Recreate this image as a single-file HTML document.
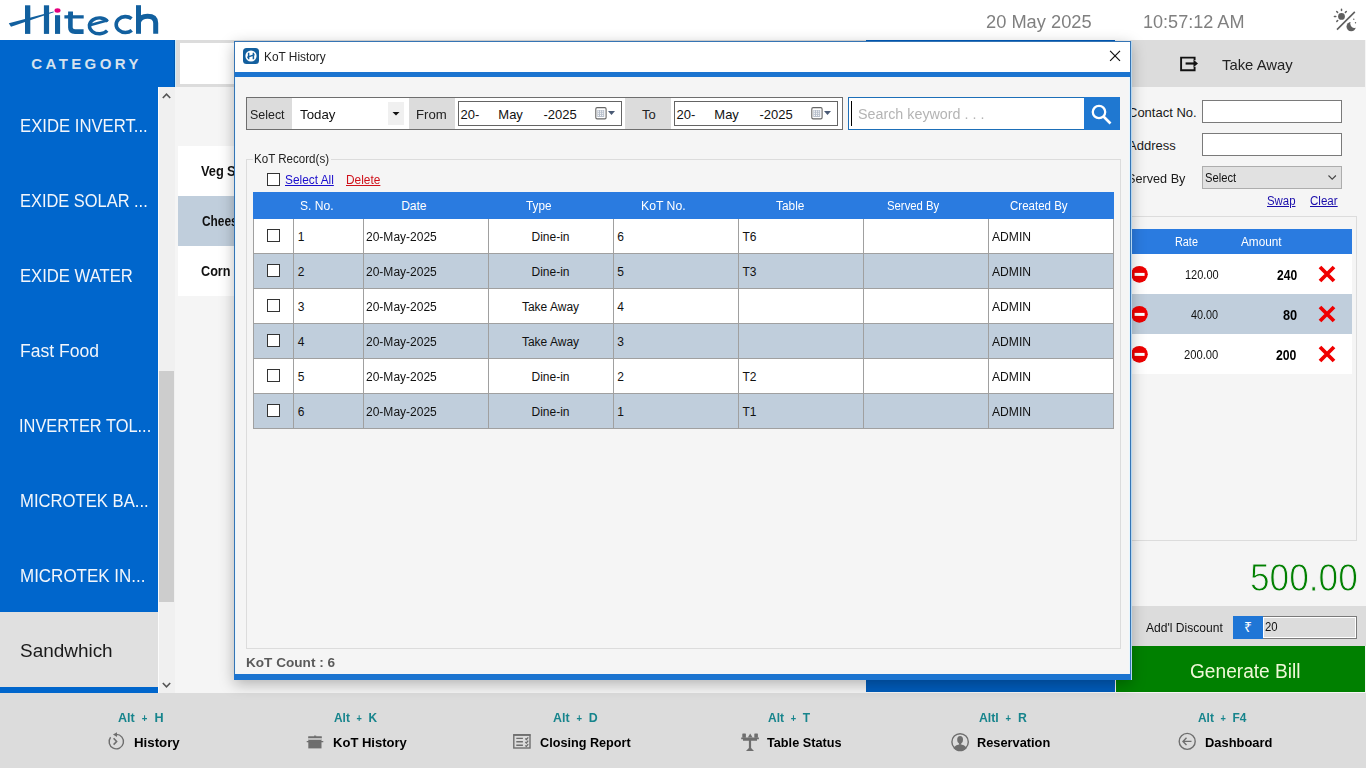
<!DOCTYPE html>
<html><head><meta charset="utf-8"><title>KoT History</title>
<style>
html,body{margin:0;padding:0;width:1366px;height:768px;overflow:hidden;font-family:"Liberation Sans", sans-serif;}
div{font-family:"Liberation Sans", sans-serif;}
</style></head><body>
<div style="position:absolute;left:0px;top:0px;width:1366px;height:40px;background:#fff"></div>
<div style="position:absolute;left:0px;top:40px;width:1366px;height:653px;background:#f5f5f5"></div>
<div style="position:absolute;left:0px;top:693px;width:1366px;height:75px;background:#dcdcdc"></div>
<svg style="position:absolute;left:0;top:0" width="170" height="40" viewBox="0 0 170 40">
<rect x="25" y="5.3" width="5.3" height="28.6" fill="#12609f"/>
<rect x="43.9" y="5.3" width="5.2" height="28.6" fill="#12609f"/>
<rect x="55" y="15.2" width="5.1" height="18.7" fill="#12609f"/>
<ellipse cx="57.5" cy="10.5" rx="3" ry="2.2" fill="#e5007e"/>
<path d="M8.8 23.2 L53.5 11.5 L53.8 12.3 L11 26.8 Z" fill="#12609f"/>
<g fill="none" stroke="#12609f">
<path d="M70.4 11.5 V27.5 Q70.4 31.6 75 31.6 H83.6" stroke-width="4.6"/>
<path d="M88 25.8 L107.8 20.2" stroke-width="2.6"/>
<path d="M107.6 21.5 A9.9 7.9 0 1 0 107.2 30.6" stroke-width="3.4"/>
<path d="M131.6 18.6 A9.3 7.95 0 1 0 131.8 30.4" stroke-width="3.6"/>
<path d="M138.5 22 Q140.5 16.2 147.5 16.2 Q155.7 16.2 155.7 23 V33.8" stroke-width="5"/>
</g>
<path d="M64.4 15.3 H83.7 V18.5 H64.4 Z M67.6 15.3 L73 11.5 V15.3 Z" fill="#12609f"/>
<rect x="136" y="5.2" width="5" height="28.6" fill="#12609f"/>
</svg>
<div style="position:absolute;left:985.56px;top:14px;font-size:17.5px;line-height:17.5px;color:#808080;font-weight:normal;white-space:nowrap;transform:scaleX(1.0440);transform-origin:0 0;">20 May 2025</div>
<div style="position:absolute;left:1142.67px;top:14px;font-size:17.5px;line-height:17.5px;color:#808080;font-weight:normal;white-space:nowrap;transform:scaleX(1.0323);transform-origin:0 0;">10:57:12 AM</div>
<svg style="position:absolute;left:1330px;top:5px" width="30" height="30" viewBox="1330 5 30 30">
<defs><mask id="mm"><rect x="1330" y="5" width="30" height="30" fill="#fff"/><circle cx="1354.6" cy="23.6" r="4.3" fill="#000"/></mask></defs>
<g fill="#5f5f5f" stroke="none">
<circle cx="1341.5" cy="16.4" r="3.4"/>
<circle cx="1351.2" cy="26.6" r="4.7" mask="url(#mm)"/>
<circle cx="1353.8" cy="19.3" r="0.7"/><circle cx="1355.5" cy="22.7" r="0.7"/>
</g>
<g stroke="#5f5f5f" stroke-width="1.5" stroke-linecap="round">
<path d="M1341.5 9.2 V10.6 M1336.7 11.5 L1337.6 12.4 M1346.3 11.5 L1345.4 12.4 M1334.4 16.6 H1335.8 M1336.8 21.4 L1337.7 20.5"/>
</g>
<line x1="1337" y1="29.6" x2="1354.8" y2="11.9" stroke="#5f5f5f" stroke-width="1.6"/>
</svg>
<div style="position:absolute;left:0px;top:40px;width:175px;height:47px;background:#0066cc"></div>
<div style="position:absolute;left:31.30px;top:56px;font-size:15px;line-height:15px;color:#d6e2ee;font-weight:bold;white-space:nowrap;transform:scaleX(1.0000);transform-origin:0 0;letter-spacing:3.4px;">CATEGORY</div>
<div style="position:absolute;left:0px;top:87px;width:158px;height:606px;background:#0066cc"></div>
<div style="position:absolute;left:20.25px;top:118px;font-size:17.5px;line-height:17.5px;color:#f2f6fb;font-weight:normal;white-space:nowrap;transform:scaleX(0.9542);transform-origin:0 0;">EXIDE INVERT...</div>
<div style="position:absolute;left:20.26px;top:193px;font-size:17.5px;line-height:17.5px;color:#f2f6fb;font-weight:normal;white-space:nowrap;transform:scaleX(0.9381);transform-origin:0 0;">EXIDE SOLAR ...</div>
<div style="position:absolute;left:20.25px;top:268px;font-size:17.5px;line-height:17.5px;color:#f2f6fb;font-weight:normal;white-space:nowrap;transform:scaleX(0.9513);transform-origin:0 0;">EXIDE WATER</div>
<div style="position:absolute;left:20.20px;top:343px;font-size:17.5px;line-height:17.5px;color:#f2f6fb;font-weight:normal;white-space:nowrap;transform:scaleX(1.0026);transform-origin:0 0;">Fast Food</div>
<div style="position:absolute;left:19.32px;top:418px;font-size:17.5px;line-height:17.5px;color:#f2f6fb;font-weight:normal;white-space:nowrap;transform:scaleX(0.9377);transform-origin:0 0;">INVERTER TOL...</div>
<div style="position:absolute;left:20.25px;top:493px;font-size:17.5px;line-height:17.5px;color:#f2f6fb;font-weight:normal;white-space:nowrap;transform:scaleX(0.9526);transform-origin:0 0;">MICROTEK BA...</div>
<div style="position:absolute;left:20.23px;top:568px;font-size:17.5px;line-height:17.5px;color:#f2f6fb;font-weight:normal;white-space:nowrap;transform:scaleX(0.9701);transform-origin:0 0;">MICROTEK IN...</div>
<div style="position:absolute;left:0px;top:612px;width:158px;height:75px;background:#e0e0e0"></div>
<div style="position:absolute;left:19.62px;top:643px;font-size:17.5px;line-height:17.5px;color:#1a1a1a;font-weight:normal;white-space:nowrap;transform:scaleX(1.0821);transform-origin:0 0;">Sandwhich</div>
<div style="position:absolute;left:0px;top:687px;width:158px;height:6px;background:#0066cc"></div>
<div style="position:absolute;left:158px;top:87px;width:17px;height:606px;background:#f0f0f0"></div>
<div style="position:absolute;left:158px;top:87px;width:1px;height:606px;background:#fbfbfb"></div>
<div style="position:absolute;left:159px;top:371px;width:15px;height:231px;background:#cdcdcd"></div>
<svg style="position:absolute;left:158px;top:87px" width="17" height="606"><path d="M4.8 11 L8.5 7.2 L12.2 11" fill="none" stroke="#555" stroke-width="1.6"/><path d="M4.8 596 L8.5 599.8 L12.2 596" fill="none" stroke="#555" stroke-width="1.6"/></svg>
<div style="position:absolute;left:175px;top:40px;width:700px;height:47px;background:#dcdcdc"></div>
<div style="position:absolute;left:180px;top:43px;width:690px;height:41px;background:#fff"></div>
<div style="position:absolute;left:866px;top:40px;width:249px;height:2px;background:#005cbb"></div>
<div style="position:absolute;left:174px;top:40px;width:1px;height:47px;background:#0058b0"></div>
<div style="position:absolute;left:175px;top:40px;width:1px;height:47px;background:#c8ecff"></div>
<div style="position:absolute;left:178px;top:146px;width:700px;height:50px;background:#fff"></div>
<div style="position:absolute;left:178px;top:196px;width:700px;height:50px;background:#c0cedc"></div>
<div style="position:absolute;left:178px;top:246px;width:700px;height:50px;background:#fff"></div>
<div style="position:absolute;left:201.00px;top:164px;font-size:14px;line-height:14px;color:#111;font-weight:bold;white-space:nowrap;transform:scaleX(0.9167);transform-origin:0 0;">Veg</div>
<div style="position:absolute;left:227.4px;top:164px;font-size:14px;line-height:14px;color:#111;font-weight:bold;white-space:nowrap;transform:scaleX(0.92);transform-origin:0 0;">Sandwich</div>
<div style="position:absolute;left:201.5px;top:214px;font-size:14px;line-height:14px;color:#111;font-weight:bold;white-space:nowrap;transform:scaleX(0.85);transform-origin:0 0;">Cheese Sandwich</div>
<div style="position:absolute;left:200.60px;top:264px;font-size:14px;line-height:14px;color:#111;font-weight:bold;white-space:nowrap;transform:scaleX(0.9032);transform-origin:0 0;">Corn</div>
<div style="position:absolute;left:1130px;top:40px;width:235px;height:47px;background:#dcdcdc"></div>
<svg style="position:absolute;left:1178px;top:54px" width="22" height="20" viewBox="1178 54 22 20"><path d="M1194.6 60.2 V57.6 H1181.1 V70.3 H1194.6 V66.8" fill="none" stroke="#111" stroke-width="1.9"/><path d="M1185.6 63.5 H1194" stroke="#111" stroke-width="2.2"/><path d="M1193.5 59.8 L1198 63.5 L1193.5 67.2 Z" fill="#111"/></svg>
<div style="position:absolute;left:1221.70px;top:57px;font-size:15px;line-height:15px;color:#222;font-weight:normal;white-space:nowrap;transform:scaleX(0.9889);transform-origin:0 0;">Take Away</div>
<div style="position:absolute;left:1128px;top:106px;font-size:13px;line-height:13px;color:#1a1a1a;font-weight:normal;white-space:nowrap;">Contact No.</div>
<div style="position:absolute;left:1128px;top:139px;font-size:13px;line-height:13px;color:#1a1a1a;font-weight:normal;white-space:nowrap;">Address</div>
<div style="position:absolute;left:1126.53px;top:172px;font-size:13px;line-height:13px;color:#1a1a1a;font-weight:normal;white-space:nowrap;transform:scaleX(0.9746);transform-origin:0 0;">Served By</div>
<div style="position:absolute;left:1202px;top:100px;width:140px;height:23px;background:#fff;box-sizing:border-box;border:1px solid #7a7a7a"></div>
<div style="position:absolute;left:1202px;top:133px;width:140px;height:23px;background:#fff;box-sizing:border-box;border:1px solid #7a7a7a"></div>
<div style="position:absolute;left:1202px;top:166px;width:140px;height:23px;background:#e1e1e1;box-sizing:border-box;border:1px solid #adadad"></div>
<div style="position:absolute;left:1205.30px;top:172px;font-size:12.5px;line-height:12.5px;color:#111;font-weight:normal;white-space:nowrap;transform:scaleX(0.8971);transform-origin:0 0;">Select</div>
<svg style="position:absolute;left:1326px;top:172px" width="12" height="10"><path d="M2.5 3.5 L6.2 7.2 L9.9 3.5" fill="none" stroke="#444" stroke-width="1.1"/></svg>
<div style="position:absolute;left:1267.35px;top:195px;font-size:12px;line-height:12px;color:#1a0dab;font-weight:normal;white-space:nowrap;transform:scaleX(0.9483);transform-origin:0 0;text-decoration:underline;">Swap</div>
<div style="position:absolute;left:1310.14px;top:195px;font-size:12px;line-height:12px;color:#1a0dab;font-weight:normal;white-space:nowrap;transform:scaleX(0.9643);transform-origin:0 0;text-decoration:underline;">Clear</div>
<div style="position:absolute;left:1120px;top:216px;width:237px;height:325px;box-sizing:border-box;border:1px solid #dcdcdc"></div>
<div style="position:absolute;left:1130px;top:229px;width:222px;height:25px;background:#2a7be0"></div>
<div style="position:absolute;left:1174.70px;top:236px;font-size:12px;line-height:12px;color:#fff;font-weight:normal;white-space:nowrap;transform:scaleX(0.9042);transform-origin:0 0;">Rate</div>
<div style="position:absolute;left:1241.40px;top:236px;font-size:12px;line-height:12px;color:#fff;font-weight:normal;white-space:nowrap;transform:scaleX(0.9829);transform-origin:0 0;">Amount</div>
<div style="position:absolute;left:1130px;top:254px;width:222px;height:40px;background:#fff"></div>
<div style="position:absolute;left:1184.98px;top:269px;font-size:12px;line-height:12px;color:#111;font-weight:normal;white-space:nowrap;transform:scaleX(0.9171);transform-origin:0 0;">120.00</div>
<div style="position:absolute;left:1276.70px;top:268px;font-size:14px;line-height:14px;color:#000;font-weight:bold;white-space:nowrap;transform:scaleX(0.8609);transform-origin:0 0;">240</div>
<svg style="position:absolute;left:1130px;top:265px" width="20" height="20" viewBox="0 0 20 20"><circle cx="9.4" cy="9.3" r="8.4" fill="#ee0000"/><rect x="4.6" y="7.9" width="10" height="3" fill="#fff"/></svg>
<svg style="position:absolute;left:1317px;top:264px" width="20" height="20" viewBox="0 0 20 20"><path d="M3 3 L17 17 M17 3 L3 17" stroke="#f00000" stroke-width="3.8"/></svg>
<div style="position:absolute;left:1130px;top:294px;width:222px;height:40px;background:#c0cedc"></div>
<div style="position:absolute;left:1190.90px;top:309px;font-size:12px;line-height:12px;color:#111;font-weight:normal;white-space:nowrap;transform:scaleX(0.9033);transform-origin:0 0;">40.00</div>
<div style="position:absolute;left:1282.80px;top:308px;font-size:14px;line-height:14px;color:#000;font-weight:bold;white-space:nowrap;transform:scaleX(0.9133);transform-origin:0 0;">80</div>
<svg style="position:absolute;left:1130px;top:305px" width="20" height="20" viewBox="0 0 20 20"><circle cx="9.4" cy="9.3" r="8.4" fill="#ee0000"/><rect x="4.6" y="7.9" width="10" height="3" fill="#fff"/></svg>
<svg style="position:absolute;left:1317px;top:304px" width="20" height="20" viewBox="0 0 20 20"><path d="M3 3 L17 17 M17 3 L3 17" stroke="#f00000" stroke-width="3.8"/></svg>
<div style="position:absolute;left:1130px;top:334px;width:222px;height:40px;background:#fff"></div>
<div style="position:absolute;left:1184.37px;top:349px;font-size:12px;line-height:12px;color:#111;font-weight:normal;white-space:nowrap;transform:scaleX(0.9343);transform-origin:0 0;">200.00</div>
<div style="position:absolute;left:1276.40px;top:348px;font-size:14px;line-height:14px;color:#000;font-weight:bold;white-space:nowrap;transform:scaleX(0.8739);transform-origin:0 0;">200</div>
<svg style="position:absolute;left:1130px;top:345px" width="20" height="20" viewBox="0 0 20 20"><circle cx="9.4" cy="9.3" r="8.4" fill="#ee0000"/><rect x="4.6" y="7.9" width="10" height="3" fill="#fff"/></svg>
<svg style="position:absolute;left:1317px;top:344px" width="20" height="20" viewBox="0 0 20 20"><path d="M3 3 L17 17 M17 3 L3 17" stroke="#f00000" stroke-width="3.8"/></svg>
<div style="position:absolute;left:1249.74px;top:559px;font-size:38px;line-height:38px;color:#008000;font-weight:normal;white-space:nowrap;transform:scaleX(0.9277);transform-origin:0 0;-webkit-text-stroke:0.9px #f5f5f5;">500.00</div>
<div style="position:absolute;left:1130px;top:606px;width:236px;height:40px;background:#dcdcdc"></div>
<div style="position:absolute;left:1145.50px;top:622px;font-size:12.5px;line-height:12.5px;color:#111;font-weight:normal;white-space:nowrap;transform:scaleX(0.9650);transform-origin:0 0;">Add'l Discount</div>
<div style="position:absolute;left:1233px;top:616px;width:30px;height:23px;background:#1f76d6"></div>
<div style="position:absolute;left:1232.5px;top:620px;font-size:14px;line-height:14px;color:#fff;font-weight:normal;white-space:nowrap;text-align:center;width:30px;">&#8377;</div>
<div style="position:absolute;left:1263px;top:616px;width:94px;height:23px;background:#dcdcdc;box-sizing:border-box;border:1px solid #7a7a7a;border-left:none;box-shadow:inset 1px 1px 0 #fff, inset -1px -1px 0 #fff"></div>
<div style="position:absolute;left:1265.29px;top:621px;font-size:12.5px;line-height:12.5px;color:#111;font-weight:normal;white-space:nowrap;transform:scaleX(0.9077);transform-origin:0 0;">20</div>
<div style="position:absolute;left:866px;top:680px;width:249px;height:12px;background:#005cbb"></div>
<div style="position:absolute;left:1116px;top:646px;width:249px;height:46px;background:#008000"></div>
<div style="position:absolute;left:1190.44px;top:661px;font-size:20px;line-height:20px;color:#f0f8d8;font-weight:normal;white-space:nowrap;transform:scaleX(0.9561);transform-origin:0 0;">Generate Bill</div>
<div style="position:absolute;left:118.20px;top:711px;font-size:13px;line-height:13px;color:#16848c;font-weight:bold;white-space:nowrap;transform:scaleX(0.9674);transform-origin:0 0;">Alt&nbsp;&nbsp;<span style="font-size:10px;position:relative;top:-0.5px">+</span>&nbsp;&nbsp;H</div>
<div style="position:absolute;left:133.58px;top:736px;font-size:13px;line-height:13px;color:#000;font-weight:bold;white-space:nowrap;transform:scaleX(1.0205);transform-origin:0 0;">History</div>
<div style="position:absolute;left:334.20px;top:711px;font-size:13px;line-height:13px;color:#16848c;font-weight:bold;white-space:nowrap;transform:scaleX(0.9149);transform-origin:0 0;">Alt&nbsp;&nbsp;<span style="font-size:10px;position:relative;top:-0.5px">+</span>&nbsp;&nbsp;K</div>
<div style="position:absolute;left:332.60px;top:736px;font-size:13px;line-height:13px;color:#000;font-weight:bold;white-space:nowrap;transform:scaleX(1.0027);transform-origin:0 0;">KoT History</div>
<div style="position:absolute;left:553.30px;top:711px;font-size:13px;line-height:13px;color:#16848c;font-weight:bold;white-space:nowrap;transform:scaleX(0.9532);transform-origin:0 0;">Alt&nbsp;&nbsp;<span style="font-size:10px;position:relative;top:-0.5px">+</span>&nbsp;&nbsp;D</div>
<div style="position:absolute;left:540.40px;top:736px;font-size:13px;line-height:13px;color:#000;font-weight:bold;white-space:nowrap;transform:scaleX(0.9731);transform-origin:0 0;">Closing Report</div>
<div style="position:absolute;left:768.40px;top:711px;font-size:13px;line-height:13px;color:#16848c;font-weight:bold;white-space:nowrap;transform:scaleX(0.9217);transform-origin:0 0;">Alt&nbsp;&nbsp;<span style="font-size:10px;position:relative;top:-0.5px">+</span>&nbsp;&nbsp;T</div>
<div style="position:absolute;left:766.50px;top:736px;font-size:13px;line-height:13px;color:#000;font-weight:bold;white-space:nowrap;transform:scaleX(0.9763);transform-origin:0 0;">Table Status</div>
<div style="position:absolute;left:979.20px;top:711px;font-size:13px;line-height:13px;color:#16848c;font-weight:bold;white-space:nowrap;transform:scaleX(0.9440);transform-origin:0 0;">Altl&nbsp;&nbsp;<span style="font-size:10px;position:relative;top:-0.5px">+</span>&nbsp;&nbsp;R</div>
<div style="position:absolute;left:976.72px;top:736px;font-size:13px;line-height:13px;color:#000;font-weight:bold;white-space:nowrap;transform:scaleX(0.9836);transform-origin:0 0;">Reservation</div>
<div style="position:absolute;left:1197.50px;top:711px;font-size:13px;line-height:13px;color:#16848c;font-weight:bold;white-space:nowrap;transform:scaleX(0.9170);transform-origin:0 0;">Alt&nbsp;&nbsp;<span style="font-size:10px;position:relative;top:-0.5px">+</span>&nbsp;&nbsp;F4</div>
<div style="position:absolute;left:1204.71px;top:736px;font-size:13px;line-height:13px;color:#000;font-weight:bold;white-space:nowrap;transform:scaleX(0.9924);transform-origin:0 0;">Dashboard</div>
<svg style="position:absolute;left:0;top:725px" width="1366" height="30" viewBox="0 725 1366 30">
<g fill="none" stroke="#6e6e6e" stroke-width="1.4">
<path d="M110.6 737.2 A7.2 7.2 0 1 0 116.3 734.4"/>
<path d="M113.6 738.2 L116.6 741.5 L113.6 744.6" stroke-width="1.6"/>
<circle cx="1187.2" cy="741.4" r="8"/>
<path d="M1191.5 741.4 H1183 M1186.5 737.8 L1183 741.4 L1186.5 745"/>
<circle cx="960.1" cy="741.9" r="8.2" stroke-width="1.4"/>
<rect x="513.8" y="735" width="16.2" height="13"/>
<path d="M513.2 734.9 H530.6" stroke-width="1.6"/>
<path d="M516.3 738.4 H522.9 M516.3 741.8 H522.9 M516.3 745.2 H522.9"/>
</g>
<g fill="#6e6e6e">
<path d="M113 734.6 L117 732.3 L117 737 Z"/>
<rect x="308" y="736.3" width="14" height="1.8" rx="0.8"/><rect x="314" y="735.6" width="2.2" height="1.2"/>
<rect x="308" y="738.1" width="14" height="1.9" fill="#bdbdbd"/>
<rect x="308.3" y="740" width="13.2" height="8.4"/><rect x="306.6" y="740.9" width="16.8" height="1.4" rx="0.6"/>
<path d="M741.2 737.6 H758.9 V739.2 H757 V740.7 H751.1 V748 L754 750.9 H746 L748.9 748 V740.7 H743 V739.2 H741.2 Z"/>
<rect x="742.3" y="733.4" width="3.6" height="4.4" rx="0.6"/><rect x="754.3" y="733.4" width="3.6" height="4.4" rx="0.6"/>
<path d="M747.8 737.4 L750.2 733.6 L752.6 737.4 Z"/>
<ellipse cx="960.1" cy="739.7" rx="2.9" ry="3.6"/><rect x="958.9" y="742" width="2.4" height="2.8"/>
<path d="M953.6 748.2 C955 745.6 957.5 744.6 960.1 744.6 C962.7 744.6 965.2 745.6 966.6 748.2 A8.3 8.3 0 0 1 953.6 748.2 Z"/>
</g>
<g fill="none" stroke="#6e6e6e" stroke-width="1">
<path d="M525.3 738.6 L526.4 739.6 L528.2 737.3 M525.3 742 L526.4 743 L528.2 740.7 M525.3 745.4 L526.4 746.4 L528.2 744.1" stroke-width="1.3"/>
</g>
</svg>
<div style="position:absolute;left:234px;top:41px;width:897px;height:639px;box-shadow:0 4px 14px rgba(0,0,0,0.28)"></div>
<div style="position:absolute;left:234px;top:41px;width:897px;height:639px;background:#f5f5f5;box-sizing:border-box;border:1px solid #3574b4;border-bottom:none"></div>
<div style="position:absolute;left:235px;top:42px;width:895px;height:30px;background:#fff"></div>
<div style="position:absolute;left:235px;top:72px;width:895px;height:5px;background:#1b74d0"></div>
<div style="position:absolute;left:234px;top:674px;width:897px;height:6px;background:#1b74d0"></div>
<div style="position:absolute;left:235px;top:77px;width:1px;height:597px;background:#e6f6ff"></div>
<div style="position:absolute;left:1129px;top:77px;width:1px;height:597px;background:#e6f6ff"></div>
<div style="position:absolute;left:1131px;top:41px;width:1px;height:639px;background:#b4d6f0"></div>
<svg style="position:absolute;left:243px;top:48px" width="16" height="16" viewBox="0 0 16 16">
<rect x="0" y="0" width="16" height="16" rx="3.5" fill="#135f9e"/>
<circle cx="8" cy="8" r="5.6" fill="#fff"/>
<path d="M5.6 4.8 V11.2 M10.4 4.8 V11.2 M4.2 9.4 L11.6 6.6" stroke="#135f9e" stroke-width="1.5"/>
</svg>
<div style="position:absolute;left:263.59px;top:50px;font-size:13px;line-height:13px;color:#222;font-weight:normal;white-space:nowrap;transform:scaleX(0.9119);transform-origin:0 0;">KoT History</div>
<svg style="position:absolute;left:1108px;top:49px" width="14" height="14"><path d="M2.1 1.9 L12 11.8 M12 1.9 L2.1 11.8" stroke="#111" stroke-width="1.2"/></svg>
<div style="position:absolute;left:246px;top:97px;width:597px;height:33px;background:#fff;box-sizing:border-box;border:1px solid #6e6e6e"></div>
<div style="position:absolute;left:247px;top:98px;width:45px;height:31px;background:#dcdcdc"></div>
<div style="position:absolute;left:250.34px;top:108px;font-size:13px;line-height:13px;color:#222;font-weight:normal;white-space:nowrap;transform:scaleX(0.9571);transform-origin:0 0;">Select</div>
<div style="position:absolute;left:300.40px;top:108px;font-size:13px;line-height:13px;color:#111;font-weight:normal;white-space:nowrap;transform:scaleX(1.0200);transform-origin:0 0;">Today</div>
<div style="position:absolute;left:388px;top:102px;width:16px;height:23px;background:#f0f0f0"></div>
<svg style="position:absolute;left:388px;top:102px" width="16" height="23"><path d="M4.5 10 H11.5 L8 13.5 Z" fill="#111"/></svg>
<div style="position:absolute;left:409px;top:98px;width:46px;height:31px;background:#dcdcdc"></div>
<div style="position:absolute;left:415.99px;top:108px;font-size:13px;line-height:13px;color:#222;font-weight:normal;white-space:nowrap;transform:scaleX(1.0138);transform-origin:0 0;">From</div>
<div style="position:absolute;left:458px;top:101px;width:164px;height:25px;background:#fff;box-sizing:border-box;border:1px solid #646464"></div>
<div style="position:absolute;left:625px;top:98px;width:46px;height:31px;background:#dcdcdc"></div>
<div style="position:absolute;left:642px;top:108px;font-size:13px;line-height:13px;color:#222;font-weight:normal;white-space:nowrap;">To</div>
<div style="position:absolute;left:674px;top:101px;width:164px;height:25px;background:#fff;box-sizing:border-box;border:1px solid #646464"></div>
<div style="position:absolute;left:460.5px;top:108px;font-size:13px;line-height:13px;color:#111;font-weight:normal;white-space:nowrap;">20-</div>
<div style="position:absolute;left:498.3px;top:108px;font-size:13px;line-height:13px;color:#111;font-weight:normal;white-space:nowrap;">May</div>
<div style="position:absolute;left:543.4px;top:108px;font-size:13px;line-height:13px;color:#111;font-weight:normal;white-space:nowrap;">-2025</div>
<svg style="position:absolute;left:594px;top:106px" width="24" height="15" viewBox="0 0 24 15">
<rect x="1.8" y="1.6" width="10.3" height="11.3" rx="1.3" fill="#fff" stroke="#666" stroke-width="1.1"/>
<rect x="3.3" y="4" width="6.9" height="7" fill="#b7bfcb"/><rect x="3.9" y="4.6" width="1.1" height="1.1" fill="#fff"/><rect x="3.9" y="6.7" width="1.1" height="1.1" fill="#fff"/><rect x="3.9" y="8.8" width="1.1" height="1.1" fill="#fff"/><rect x="6.0" y="4.6" width="1.1" height="1.1" fill="#fff"/><rect x="6.0" y="6.7" width="1.1" height="1.1" fill="#fff"/><rect x="6.0" y="8.8" width="1.1" height="1.1" fill="#fff"/><rect x="8.1" y="4.6" width="1.1" height="1.1" fill="#fff"/><rect x="8.1" y="6.7" width="1.1" height="1.1" fill="#fff"/><rect x="8.1" y="8.8" width="1.1" height="1.1" fill="#fff"/>
<path d="M14 5 H21 L17.5 9 Z" fill="#4a5a75"/></svg>
<div style="position:absolute;left:676.5px;top:108px;font-size:13px;line-height:13px;color:#111;font-weight:normal;white-space:nowrap;">20-</div>
<div style="position:absolute;left:714.3px;top:108px;font-size:13px;line-height:13px;color:#111;font-weight:normal;white-space:nowrap;">May</div>
<div style="position:absolute;left:759.4px;top:108px;font-size:13px;line-height:13px;color:#111;font-weight:normal;white-space:nowrap;">-2025</div>
<svg style="position:absolute;left:810px;top:106px" width="24" height="15" viewBox="0 0 24 15">
<rect x="1.8" y="1.6" width="10.3" height="11.3" rx="1.3" fill="#fff" stroke="#666" stroke-width="1.1"/>
<rect x="3.3" y="4" width="6.9" height="7" fill="#b7bfcb"/><rect x="3.9" y="4.6" width="1.1" height="1.1" fill="#fff"/><rect x="3.9" y="6.7" width="1.1" height="1.1" fill="#fff"/><rect x="3.9" y="8.8" width="1.1" height="1.1" fill="#fff"/><rect x="6.0" y="4.6" width="1.1" height="1.1" fill="#fff"/><rect x="6.0" y="6.7" width="1.1" height="1.1" fill="#fff"/><rect x="6.0" y="8.8" width="1.1" height="1.1" fill="#fff"/><rect x="8.1" y="4.6" width="1.1" height="1.1" fill="#fff"/><rect x="8.1" y="6.7" width="1.1" height="1.1" fill="#fff"/><rect x="8.1" y="8.8" width="1.1" height="1.1" fill="#fff"/>
<path d="M14 5 H21 L17.5 9 Z" fill="#4a5a75"/></svg>
<div style="position:absolute;left:848px;top:97px;width:272px;height:33px;background:#fff;box-sizing:border-box;border:1px solid #1d6fb8"></div>
<div style="position:absolute;left:1084px;top:97px;width:36px;height:33px;background:#1f78d1"></div>
<div style="position:absolute;left:851px;top:101px;width:1px;height:25px;background:#000"></div>
<div style="position:absolute;left:858.28px;top:107px;font-size:14px;line-height:14px;color:#b4b4b4;font-weight:normal;white-space:nowrap;transform:scaleX(1.0213);transform-origin:0 0;">Search keyword . . .</div>
<svg style="position:absolute;left:1084px;top:97px" width="36" height="33" viewBox="0 0 36 33"><circle cx="15" cy="15" r="6.2" fill="none" stroke="#fff" stroke-width="2.3"/><path d="M19.5 19.5 L26.5 26.5" stroke="#fff" stroke-width="2.6"/></svg>
<div style="position:absolute;left:246px;top:159px;width:875px;height:490px;box-sizing:border-box;border:1px solid #dcdcdc"></div>
<div style="position:absolute;left:253px;top:152px;width:78px;height:14px;background:#f5f5f5"></div>
<div style="position:absolute;left:254.24px;top:153px;font-size:12px;line-height:12px;color:#222;font-weight:normal;white-space:nowrap;transform:scaleX(0.9645);transform-origin:0 0;">KoT Record(s)</div>
<div style="position:absolute;left:267px;top:173px;width:13px;height:13px;background:#fff;box-sizing:border-box;border:1px solid #333"></div>
<div style="position:absolute;left:285.31px;top:174px;font-size:12px;line-height:12px;color:#1a0dcc;font-weight:normal;white-space:nowrap;transform:scaleX(0.9896);transform-origin:0 0;text-decoration:underline;">Select All</div>
<div style="position:absolute;left:346.31px;top:174px;font-size:12px;line-height:12px;color:#d0101a;font-weight:normal;white-space:nowrap;transform:scaleX(0.9909);transform-origin:0 0;text-decoration:underline;">Delete</div>
<div style="position:absolute;left:253px;top:192px;width:861px;height:27px;background:#2a7be0"></div>
<div style="position:absolute;left:299.99px;top:200px;font-size:12px;line-height:12px;color:#fff;font-weight:normal;white-space:nowrap;transform:scaleX(1.0097);transform-origin:0 0;">S. No.</div>
<div style="position:absolute;left:401.20px;top:200px;font-size:12px;line-height:12px;color:#fff;font-weight:normal;white-space:nowrap;transform:scaleX(1.0000);transform-origin:0 0;">Date</div>
<div style="position:absolute;left:526.00px;top:200px;font-size:12px;line-height:12px;color:#fff;font-weight:normal;white-space:nowrap;transform:scaleX(0.9769);transform-origin:0 0;">Type</div>
<div style="position:absolute;left:640.98px;top:200px;font-size:12px;line-height:12px;color:#fff;font-weight:normal;white-space:nowrap;transform:scaleX(1.0190);transform-origin:0 0;">KoT No.</div>
<div style="position:absolute;left:775.50px;top:200px;font-size:12px;line-height:12px;color:#fff;font-weight:normal;white-space:nowrap;transform:scaleX(0.9893);transform-origin:0 0;">Table</div>
<div style="position:absolute;left:887.26px;top:200px;font-size:12px;line-height:12px;color:#fff;font-weight:normal;white-space:nowrap;transform:scaleX(0.9444);transform-origin:0 0;">Served By</div>
<div style="position:absolute;left:1009.74px;top:200px;font-size:12px;line-height:12px;color:#fff;font-weight:normal;white-space:nowrap;transform:scaleX(0.9593);transform-origin:0 0;">Created By</div>
<div style="position:absolute;left:253px;top:219px;width:861px;height:35px;background:#fff"></div>
<div style="position:absolute;left:267px;top:229px;width:13px;height:13px;background:#fff;box-sizing:border-box;border:1px solid #333"></div>
<div style="position:absolute;left:297.8px;top:231px;font-size:12px;line-height:12px;color:#111;font-weight:normal;white-space:nowrap;">1</div>
<div style="position:absolute;left:366.00px;top:231px;font-size:12px;line-height:12px;color:#111;font-weight:normal;white-space:nowrap;transform:scaleX(1.0014);transform-origin:0 0;">20-May-2025</div>
<div style="position:absolute;left:490.5px;top:231px;font-size:12px;line-height:12px;color:#111;font-weight:normal;white-space:nowrap;text-align:center;width:120px;">Dine-in</div>
<div style="position:absolute;left:617.3px;top:231px;font-size:12px;line-height:12px;color:#111;font-weight:normal;white-space:nowrap;">6</div>
<div style="position:absolute;left:742.5px;top:231px;font-size:12px;line-height:12px;color:#111;font-weight:normal;white-space:nowrap;">T6</div>
<div style="position:absolute;left:992.10px;top:231px;font-size:12px;line-height:12px;color:#111;font-weight:normal;white-space:nowrap;transform:scaleX(1.0105);transform-origin:0 0;">ADMIN</div>
<div style="position:absolute;left:253px;top:254px;width:861px;height:35px;background:#c0cedc"></div>
<div style="position:absolute;left:267px;top:264px;width:13px;height:13px;background:#fff;box-sizing:border-box;border:1px solid #333"></div>
<div style="position:absolute;left:297.8px;top:266px;font-size:12px;line-height:12px;color:#111;font-weight:normal;white-space:nowrap;">2</div>
<div style="position:absolute;left:366.00px;top:266px;font-size:12px;line-height:12px;color:#111;font-weight:normal;white-space:nowrap;transform:scaleX(1.0014);transform-origin:0 0;">20-May-2025</div>
<div style="position:absolute;left:490.5px;top:266px;font-size:12px;line-height:12px;color:#111;font-weight:normal;white-space:nowrap;text-align:center;width:120px;">Dine-in</div>
<div style="position:absolute;left:617.3px;top:266px;font-size:12px;line-height:12px;color:#111;font-weight:normal;white-space:nowrap;">5</div>
<div style="position:absolute;left:742.5px;top:266px;font-size:12px;line-height:12px;color:#111;font-weight:normal;white-space:nowrap;">T3</div>
<div style="position:absolute;left:992.10px;top:266px;font-size:12px;line-height:12px;color:#111;font-weight:normal;white-space:nowrap;transform:scaleX(1.0105);transform-origin:0 0;">ADMIN</div>
<div style="position:absolute;left:253px;top:289px;width:861px;height:35px;background:#fff"></div>
<div style="position:absolute;left:267px;top:299px;width:13px;height:13px;background:#fff;box-sizing:border-box;border:1px solid #333"></div>
<div style="position:absolute;left:297.8px;top:301px;font-size:12px;line-height:12px;color:#111;font-weight:normal;white-space:nowrap;">3</div>
<div style="position:absolute;left:366.00px;top:301px;font-size:12px;line-height:12px;color:#111;font-weight:normal;white-space:nowrap;transform:scaleX(1.0014);transform-origin:0 0;">20-May-2025</div>
<div style="position:absolute;left:490.5px;top:301px;font-size:12px;line-height:12px;color:#111;font-weight:normal;white-space:nowrap;text-align:center;width:120px;">Take Away</div>
<div style="position:absolute;left:617.3px;top:301px;font-size:12px;line-height:12px;color:#111;font-weight:normal;white-space:nowrap;">4</div>
<div style="position:absolute;left:992.10px;top:301px;font-size:12px;line-height:12px;color:#111;font-weight:normal;white-space:nowrap;transform:scaleX(1.0105);transform-origin:0 0;">ADMIN</div>
<div style="position:absolute;left:253px;top:324px;width:861px;height:35px;background:#c0cedc"></div>
<div style="position:absolute;left:267px;top:334px;width:13px;height:13px;background:#fff;box-sizing:border-box;border:1px solid #333"></div>
<div style="position:absolute;left:297.8px;top:336px;font-size:12px;line-height:12px;color:#111;font-weight:normal;white-space:nowrap;">4</div>
<div style="position:absolute;left:366.00px;top:336px;font-size:12px;line-height:12px;color:#111;font-weight:normal;white-space:nowrap;transform:scaleX(1.0014);transform-origin:0 0;">20-May-2025</div>
<div style="position:absolute;left:490.5px;top:336px;font-size:12px;line-height:12px;color:#111;font-weight:normal;white-space:nowrap;text-align:center;width:120px;">Take Away</div>
<div style="position:absolute;left:617.3px;top:336px;font-size:12px;line-height:12px;color:#111;font-weight:normal;white-space:nowrap;">3</div>
<div style="position:absolute;left:992.10px;top:336px;font-size:12px;line-height:12px;color:#111;font-weight:normal;white-space:nowrap;transform:scaleX(1.0105);transform-origin:0 0;">ADMIN</div>
<div style="position:absolute;left:253px;top:359px;width:861px;height:35px;background:#fff"></div>
<div style="position:absolute;left:267px;top:369px;width:13px;height:13px;background:#fff;box-sizing:border-box;border:1px solid #333"></div>
<div style="position:absolute;left:297.8px;top:371px;font-size:12px;line-height:12px;color:#111;font-weight:normal;white-space:nowrap;">5</div>
<div style="position:absolute;left:366.00px;top:371px;font-size:12px;line-height:12px;color:#111;font-weight:normal;white-space:nowrap;transform:scaleX(1.0014);transform-origin:0 0;">20-May-2025</div>
<div style="position:absolute;left:490.5px;top:371px;font-size:12px;line-height:12px;color:#111;font-weight:normal;white-space:nowrap;text-align:center;width:120px;">Dine-in</div>
<div style="position:absolute;left:617.3px;top:371px;font-size:12px;line-height:12px;color:#111;font-weight:normal;white-space:nowrap;">2</div>
<div style="position:absolute;left:742.5px;top:371px;font-size:12px;line-height:12px;color:#111;font-weight:normal;white-space:nowrap;">T2</div>
<div style="position:absolute;left:992.10px;top:371px;font-size:12px;line-height:12px;color:#111;font-weight:normal;white-space:nowrap;transform:scaleX(1.0105);transform-origin:0 0;">ADMIN</div>
<div style="position:absolute;left:253px;top:394px;width:861px;height:35px;background:#c0cedc"></div>
<div style="position:absolute;left:267px;top:404px;width:13px;height:13px;background:#fff;box-sizing:border-box;border:1px solid #333"></div>
<div style="position:absolute;left:297.8px;top:406px;font-size:12px;line-height:12px;color:#111;font-weight:normal;white-space:nowrap;">6</div>
<div style="position:absolute;left:366.00px;top:406px;font-size:12px;line-height:12px;color:#111;font-weight:normal;white-space:nowrap;transform:scaleX(1.0014);transform-origin:0 0;">20-May-2025</div>
<div style="position:absolute;left:490.5px;top:406px;font-size:12px;line-height:12px;color:#111;font-weight:normal;white-space:nowrap;text-align:center;width:120px;">Dine-in</div>
<div style="position:absolute;left:617.3px;top:406px;font-size:12px;line-height:12px;color:#111;font-weight:normal;white-space:nowrap;">1</div>
<div style="position:absolute;left:742.5px;top:406px;font-size:12px;line-height:12px;color:#111;font-weight:normal;white-space:nowrap;">T1</div>
<div style="position:absolute;left:992.10px;top:406px;font-size:12px;line-height:12px;color:#111;font-weight:normal;white-space:nowrap;transform:scaleX(1.0105);transform-origin:0 0;">ADMIN</div>
<div style="position:absolute;left:253px;top:253px;width:861px;height:1px;background:#a0a0a0"></div>
<div style="position:absolute;left:253px;top:288px;width:861px;height:1px;background:#a0a0a0"></div>
<div style="position:absolute;left:253px;top:323px;width:861px;height:1px;background:#a0a0a0"></div>
<div style="position:absolute;left:253px;top:358px;width:861px;height:1px;background:#a0a0a0"></div>
<div style="position:absolute;left:253px;top:393px;width:861px;height:1px;background:#a0a0a0"></div>
<div style="position:absolute;left:253px;top:428px;width:861px;height:1px;background:#a0a0a0"></div>
<div style="position:absolute;left:253px;top:219px;width:1px;height:210px;background:#a0a0a0"></div>
<div style="position:absolute;left:293px;top:219px;width:1px;height:210px;background:#a0a0a0"></div>
<div style="position:absolute;left:363px;top:219px;width:1px;height:210px;background:#a0a0a0"></div>
<div style="position:absolute;left:488px;top:219px;width:1px;height:210px;background:#a0a0a0"></div>
<div style="position:absolute;left:613px;top:219px;width:1px;height:210px;background:#a0a0a0"></div>
<div style="position:absolute;left:738px;top:219px;width:1px;height:210px;background:#a0a0a0"></div>
<div style="position:absolute;left:863px;top:219px;width:1px;height:210px;background:#a0a0a0"></div>
<div style="position:absolute;left:988px;top:219px;width:1px;height:210px;background:#a0a0a0"></div>
<div style="position:absolute;left:1113px;top:219px;width:1px;height:210px;background:#a0a0a0"></div>
<div style="position:absolute;left:245.65px;top:656px;font-size:13px;line-height:13px;color:#5a5a5a;font-weight:bold;white-space:nowrap;transform:scaleX(1.0452);transform-origin:0 0;">KoT Count : 6</div>
</body></html>
